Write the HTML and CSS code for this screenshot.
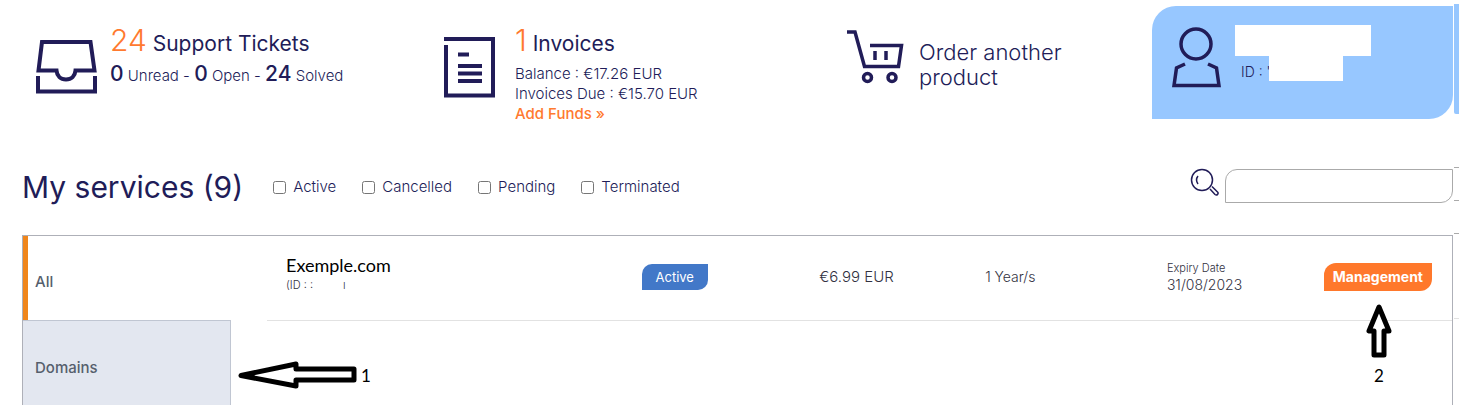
FILE: index.html
```
<!DOCTYPE html>
<html lang="en">
<head>
<meta charset="utf-8">
<title>My services</title>
<link rel="stylesheet" href="styles.css">
</head>
<body>
<header class="summary">
  <section class="stat">
    <svg class="stat-icon inbox-icon" width="61" height="54" viewBox="0 0 61 54" fill="none" stroke="currentColor" stroke-width="4" aria-hidden="true">
      <path d="M6 2H54.500L58.500 30.500H39.500C39 36 35.500 39.500 30 39.500S21 36 20.500 30.500H2.500Z"/><path d="M2 36V51.500H59V36"/>
    </svg>
    <div class="stat-body">
      <h2 class="stat-title"><span class="count">24</span> Support Tickets</h2>
      <p class="ticket-counts"><b>0</b> Unread - <b>0</b> Open - <b>24</b> Solved</p>
    </div>
  </section>
  <section class="stat">
    <svg class="stat-icon" width="51" height="61" viewBox="0 0 51 61" fill="none" stroke="currentColor" stroke-width="4" aria-hidden="true">
      <path d="M0 2H49V58.500H2V8"/><path d="M14 17.500H25M14 29H38M14 36.500H38M14 44H38"/>
    </svg>
    <div class="stat-body">
      <h2 class="stat-title"><span class="count">1</span> Invoices</h2>
      <div class="billing">
        <p>Balance : €17.26 EUR</p>
        <p>Invoices Due : €15.70 EUR</p>
        <a class="add-funds" href="#funds">Add Funds »</a>
      </div>
    </div>
  </section>
  <a class="order" href="#order">
    <svg class="order-icon" width="57" height="54" viewBox="0 0 57 54" fill="none" stroke="currentColor" stroke-width="3.500" aria-hidden="true">
      <path d="M0 2H8L17.500 36.500H51.500L54.500 15.500H23"/><path d="M28 21V30M39 21V30"/><circle cx="20.500" cy="47.500" r="4"/><circle cx="45" cy="47.500" r="4"/>
    </svg>
    <span class="order-text">Order another product</span>
  </a>
  <section class="profile">
    <svg class="profile-icon" width="49" height="61" viewBox="0 0 49 61" fill="none" stroke="currentColor" stroke-width="3.500" aria-hidden="true">
      <circle cx="24" cy="17" r="15"/><path d="M13 37L4.500 41L2 58.500H47L44.500 41L36 37"/>
    </svg>
    <div class="profile-body">
      <div class="name-mask"></div>
      <div class="profile-id"><span>ID : '</span><span class="id-mask"></span></div>
    </div>
  </section>
</header>

<main>
  <form class="toolbar">
    <h1 class="heading">My services (9)</h1>
    <div class="filters">
      <label class="filter"><input type="checkbox">Active</label>
      <label class="filter"><input type="checkbox">Cancelled</label>
      <label class="filter"><input type="checkbox">Pending</label>
      <label class="filter"><input type="checkbox">Terminated</label>
    </div>
    <label class="search-label" for="search" aria-label="Search services">
      <svg width="29" height="29" viewBox="0 0 29 29" fill="none" stroke="currentColor" stroke-width="1.500" aria-hidden="true">
        <circle cx="12" cy="12" r="10.500"/><path d="M8 8C6 10.500 6 13 8 16"/><path d="M20 21L25 26.500C27 28 29 25.500 27.500 24L22 18.500"/>
      </svg>
    </label>
    <input class="search" id="search" type="text">
  </form>

  <div class="panel">
    <nav class="categories">
      <a class="category current" href="#all">All</a>
      <a class="category shaded" href="#domains">Domains</a>
    </nav>
    <table class="services">
      <colgroup><col class="col-name"><col class="col-status"><col class="col-price"><col class="col-term"><col class="col-expiry"><col></colgroup>
      <tbody>
        <tr>
          <td><div class="service-name">Exemple.com</div><div class="service-id"><span>(ID : :</span><span>ı</span></div></td>
          <td><span class="badge">Active</span></td>
          <td>€6.99 EUR</td>
          <td class="term">1 Year/s</td>
          <td class="expiry"><div class="expiry-label">Expiry Date</div><div class="expiry-date">31/08/2023</div></td>
          <td class="action"><button class="manage" type="button">Management</button></td>
        </tr>
      </tbody>
    </table>
  </div>
</main>

<div class="note note-domains">
  <svg width="121" height="29" viewBox="0 0 121 29" fill="#fff" stroke="#000" stroke-width="5" stroke-linejoin="round" aria-hidden="true"><path d="M4 14.500L59 3V8H117V19H59V25Z"/></svg>
  <span>1</span>
</div>
<div class="note note-manage">
  <svg width="26" height="56" viewBox="0 0 26 56" fill="#fff" stroke="#000" stroke-width="5" stroke-linejoin="round" aria-hidden="true"><path d="M13 4L3 28H8V52H18V28H23Z"/></svg>
  <span>2</span>
</div>
<div class="edge edge-profile"></div>
<div class="edge edge-search"></div>
<div class="edge edge-panel"></div>
</body>
</html>
```
FILE: styles.css
```
* { box-sizing: border-box; }
body {
  margin: 0;
  min-height: 100vh;
  padding: 6px 6px 0 22px;
  display: flex;
  flex-direction: column;
  position: relative;
  overflow: hidden;
  background: #fff;
  color: #211c58;
  font-family: Inter, "Open Sans", sans-serif;
  font-size: 15px;
  font-weight: 300;
}
h1, h2, p { margin: 0; font-weight: 300; }
a { color: inherit; text-decoration: none; }
svg { display: block; flex: none; }

.summary {
  display: grid;
  grid-template-columns: 422fr 403fr 305fr 301fr;
  align-items: start;
}
.stat { display: flex; align-items: flex-start; gap: 13px; padding-top: 16px; }
.stat:first-child { padding-left: 14px; }
.stat:nth-child(2) { gap: 20px; }
.stat-icon { margin-top: 15px; }
.inbox-icon { margin-top: 18px; }
.stat-title { font-size: 21px; font-weight: 400; line-height: 36px; }
.count { font-size: 30px; font-weight: 300; color: #ff7a2f; }
.ticket-counts { line-height: 24px; }
.ticket-counts b { font-size: 21px; font-weight: 500; }
.billing { padding-top: 2px; line-height: 20px; }
.add-funds { display: block; font-weight: 500; color: #ff7a2f; }

.order { display: flex; align-items: flex-start; gap: 15px; padding-top: 24px; }
.order-text { width: 168px; margin-top: 10px; font-size: 22px; line-height: 25px; }

.profile {
  display: flex;
  gap: 14px;
  padding: 19px 20px 31px;
  background: #97c7ff;
  border-radius: 24px 0 24px 0;
}
.profile-icon { margin-top: 2px; }
.name-mask { width: 136px; height: 31px; background: #fff; }
.profile-id { display: flex; padding-left: 6px; font-size: 14px; line-height: 32px; }
.profile-id span:first-child { width: 28px; white-space: nowrap; }
.id-mask { width: 74px; height: 25px; background: #fff; }

.toolbar { display: flex; align-items: center; height: 111px; }
.heading { font-size: 30px; font-weight: 400; line-height: 40px; margin-top: 14px; }
.filters { display: flex; gap: 26px; margin: 14px auto 0 30px; }
.filter { display: flex; align-items: center; gap: 7px; line-height: 20px; }
.filter input { width: 13px; height: 13px; margin: 2px 0 0; }
.search-label { margin: 6px 6px 0 0; }
.search {
  width: 228px;
  height: 34px;
  margin: 12px 0 0;
  padding: 0 12px;
  border: 1px solid #aaa;
  border-radius: 12px 0 12px 0;
  background: #fff;
  font: inherit;
}

main { display: flex; flex-direction: column; flex: 1; }
.panel {
  display: flex;
  flex: 1;
  align-items: flex-start;
  gap: 36px;
  border: 1px solid #aeb0b8;
  border-bottom: 0;
}
.categories { display: flex; flex-direction: column; align-self: stretch; width: 208px; }
.category { padding: 0 12px; font-weight: 500; line-height: 20px; color: #565f6d; }
.current { padding: 36px 7px 28px; border-left: 5px solid #f0861b; }
.shaded {
  flex: 1;
  padding-top: 37px;
  background: #e3e7f0;
  border: 1px solid #c0c6d2;
  border-width: 1px 1px 0 0;
}

.services { flex: 1; table-layout: fixed; border-collapse: collapse; color: #32323f; }
.col-name { width: 30%; }
.col-status { width: 15%; }
.col-price { width: 14%; }
.col-term { width: 15%; }
.col-expiry { width: 13%; }
.services td { height: 84px; padding: 0 0 2px 19px; border-bottom: 1px solid #e2e2e2; }
.services .term { font-size: 14px; }
.services .expiry { padding-left: 23px; }
.services .action { padding-right: 20px; padding-left: 0; text-align: right; }
.service-name { font-family: Lato, sans-serif; font-size: 18px; font-weight: 400; line-height: 20px; color: #000; }
.service-id { display: flex; gap: 30px; padding-bottom: 4px; font-size: 11px; line-height: 20px; }
.badge {
  display: inline-block;
  padding: 0 14px;
  border-radius: 10px 0 10px 0;
  background: #4278c8;
  color: #fff;
  font-size: 13px;
  font-weight: 400;
  line-height: 26px;
}
.expiry-label { font-size: 11px; line-height: 16px; }
.expiry-date { font-size: 14px; line-height: 18px; }
.manage {
  height: 28px;
  padding: 0 9px;
  border: 0;
  border-radius: 12px 0 12px 0;
  background: #ff782b;
  color: #fff;
  font: inherit;
  font-size: 14px;
  font-weight: 700;
}

.note { position: absolute; display: flex; align-items: center; color: #000; font-family: Lato, sans-serif; font-size: 17px; font-weight: 400; }
.note-domains { left: 237px; top: 361px; gap: 3px; }
.note-manage { right: 67px; top: 303px; flex-direction: column; gap: 6px; }
.edge { position: absolute; right: 0; width: 5px; }
.edge-profile { top: 4px; height: 110px; background: #97c7ff; border-bottom-left-radius: 2px; }
.edge-search { top: 167px; height: 34px; border: 1px solid #aaa; border-width: 1px 0; }
.edge-panel { top: 233px; height: 86px; border: 1px solid #aaa; border-width: 1px 0; border-bottom-color: #e2e2e2; }
```
